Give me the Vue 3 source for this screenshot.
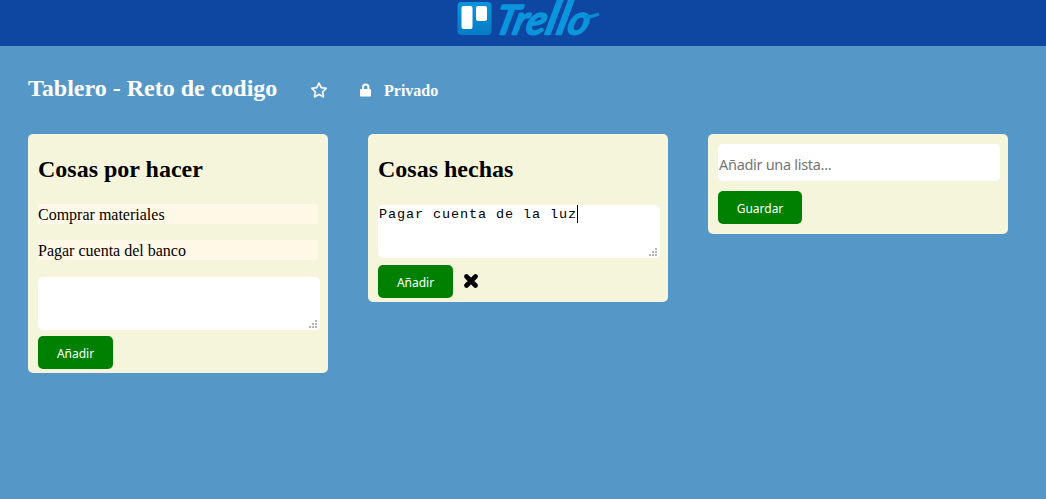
<script setup>
import { ref } from 'vue'

const lists = ref([
  { title: 'Cosas por hacer', tasks: ['Comprar materiales', 'Pagar cuenta del banco'], draft: '', editing: false },
  { title: 'Cosas hechas', tasks: [], draft: 'Pagar cuenta de la luz', editing: true },
])
const dots = [[6, 0], [3, 3], [6, 3], [0, 6], [3, 6], [6, 6]]
</script>

<template>
  <div class="page">
    <header class="bar">
      <svg class="logo" width="150" height="46" viewBox="0 0 150 46">
        <defs>
          <linearGradient id="brand" gradientUnits="userSpaceOnUse" x1="0" y1="0" x2="0" y2="36">
            <stop offset="0" stop-color="#0b95dc" />
            <stop offset="1" stop-color="#087bc5" />
          </linearGradient>
        </defs>
        <rect x="5.5" y="2" width="34" height="33" rx="4" fill="url(#brand)" />
        <rect x="9.5" y="6" width="11" height="23" rx="2" fill="#fff" />
        <rect x="24" y="6" width="11" height="15" rx="2" fill="#fff" />
        <text class="wordmark" transform="translate(41 33.500) skewX(-14)" textLength="94" lengthAdjust="spacingAndGlyphs">Tre<tspan class="tall">ll</tspan>o</text>
        <path d="M134 17 Q139 17 145.500 14.500" fill="none" stroke="#098bd3" stroke-width="3.4" stroke-linecap="round" />
      </svg>
    </header>

    <div class="heading">
      <h1>Tablero - Reto de codigo</h1>
      <svg class="star" width="16" height="16" viewBox="0 0 1664 1664">
        <path fill="#fff" stroke="#fff" stroke-width="45" d="M1137 1004l306-297-422-62-189-382-189 382-422 62 306 297-73 421 378-199 377 199zm527-357q0 22-26 48l-363 354 86 500q1 7 1 20 0 50-41 50-19 0-40-12l-449-236-449 236q-22 12-40 12-21 0-31.500-14.500t-10.500-35.500q0-6 2-20l86-500-364-354q-25-27-25-48 0-37 56-46l502-73 225-455q19-41 49-41t49 41l225 455 502 73q56 9 56 46z" />
      </svg>
      <svg class="lock" width="12" height="14" viewBox="0 0 12 14">
        <path d="M3 7V4.200a2.700 2.700 0 0 1 5.400 0V7" fill="none" stroke="#fff" stroke-width="2" />
        <rect x="0" y="6" width="11" height="7.500" rx="0.800" fill="#fff" />
      </svg>
      <strong>Privado</strong>
    </div>

    <main class="board">
      <section v-for="list in lists" :key="list.title" class="list">
        <h2>{{ list.title }}</h2>
        <p v-for="task in list.tasks" :key="task" class="task">{{ task }}</p>
        <div class="area">
          <span>{{ list.draft }}</span><i v-if="list.editing" class="caret"></i>
          <svg class="grip" width="8" height="8">
            <rect v-for="[x, y] in dots" :key="`${x}-${y}`" :x="x" :y="y" width="2" height="2" fill="#b5b5b5" />
          </svg>
        </div>
        <div class="actions">
          <button class="add">Añadir</button>
          <svg v-if="list.editing" class="close" width="14" height="14" viewBox="0 0 14 14">
            <path d="M2.500 2.500L11.500 11.500M11.500 2.500L2.500 11.500" stroke="#000" stroke-width="4.600" stroke-linecap="round" />
          </svg>
        </div>
      </section>

      <section class="list new-list">
        <input type="text" placeholder="Añadir una lista..." />
        <button class="save">Guardar</button>
      </section>
    </main>
  </div>
</template>

<style>
body {
  margin: 0;
  background: #5598c8;
}
</style>

<style scoped>
.page {
  height: 499px;
  overflow: hidden;
  background: #5598c8;
  font-family: "Liberation Serif", serif;
  font-size: 16px;
  color: #000;
}
.bar {
  height: 46px;
  padding-left: 452px;
  background: #0d47a1;
}
.logo {
  display: block;
}
.wordmark {
  font: italic 400 40px Lato, sans-serif;
  fill: url(#brand);
  stroke: url(#brand);
  stroke-width: 2.4;
  stroke-linejoin: round;
}
.tall {
  font-size: 49px;
}
.heading {
  display: flex;
  align-items: center;
  height: 88px;
  padding-left: 28px;
  box-sizing: border-box;
  color: #fff;
}
h1 {
  width: 283px;
  margin: 0 0 5px;
  font-size: 24px;
  line-height: 28px;
}
.star {
  margin-right: 33px;
}
.lock {
  margin-right: 12px;
}
strong {
  line-height: 18px;
  margin-top: 2px;
}
.board {
  display: flex;
  align-items: flex-start;
  gap: 40px;
  padding-left: 28px;
}
.list {
  width: 300px;
  box-sizing: border-box;
  padding: 0 10px 4px;
  border-radius: 5px;
  background: #f5f5dc;
}
h2 {
  margin: 0;
  padding: 21px 0 22px;
  font-size: 24px;
  line-height: 28px;
}
.task {
  width: 280px;
  height: 20px;
  margin: -1px 0 17px;
  background: #fff8e7;
  line-height: 22px;
}
.area {
  position: relative;
  display: flex;
  width: 282px;
  height: 53px;
  box-sizing: border-box;
  padding: 1px;
  border-radius: 5px;
  background: #fff;
  font: 13.5px/17px "Liberation Mono", monospace;
  letter-spacing: 0.9px;
  white-space: pre;
}
.caret {
  width: 1px;
  height: 18px;
  margin-top: -1px;
  background: #000;
}
.grip {
  position: absolute;
  right: 3px;
  bottom: 2px;
}
.actions {
  display: flex;
  margin-top: 7px;
}
.task ~ .actions {
  margin-top: 6px;
}
button {
  display: block;
  height: 33px;
  padding: 0;
  border: 0;
  border-radius: 5px;
  background: #008000;
  color: #fff;
  font: 12px/35px "Noto Sans", sans-serif;
}
.add {
  width: 75px;
}
.save {
  width: 84px;
}
.close {
  margin: 9px 0 0 11px;
}
.new-list {
  padding: 10px;
}
input {
  display: block;
  width: 282px;
  height: 37px;
  box-sizing: border-box;
  margin: 0 0 10px;
  padding: 2px 1px 0;
  border: 0;
  border-radius: 5px;
  background: #fff;
  font: 14.5px "Noto Sans", sans-serif;
  letter-spacing: -0.3px;
}
input::placeholder {
  color: #757575;
}
</style>
